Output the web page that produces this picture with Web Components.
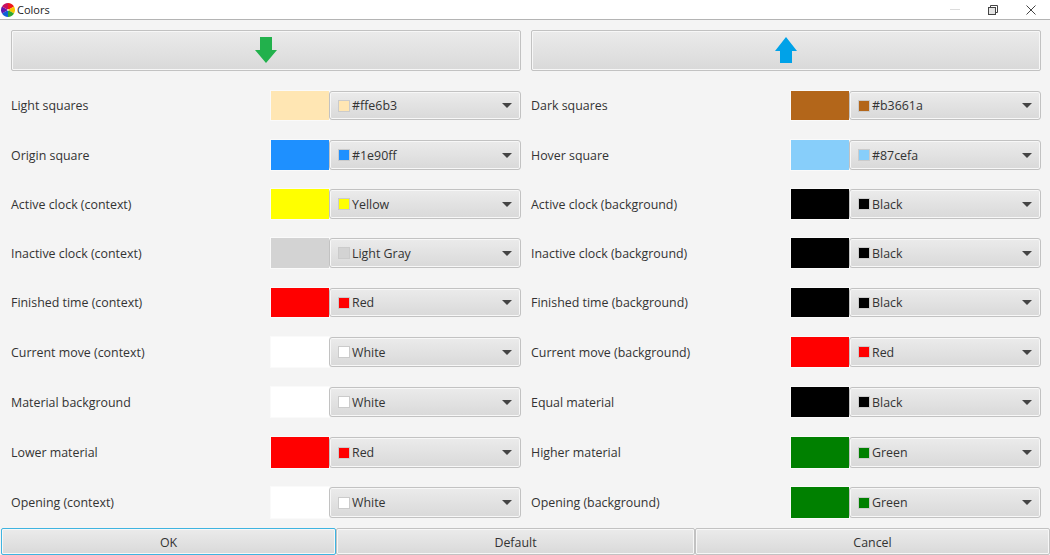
<!DOCTYPE html>
<html><head><meta charset="utf-8"><title>Colors</title>
<style>
html,body{margin:0;height:555px;overflow:hidden;background:#f4f4f4}
body{font-family:"Open Sans","Noto Sans",sans-serif;font-size:12.4px;color:#333}
</style></head><body>
<color-dialog></color-dialog>
<script>
const btnFace='background:linear-gradient(#ebebeb,#d9d9d9);border:1px solid #c2c2c2;box-shadow:0 0 0 1px #f7f7f7 inset;box-sizing:border-box;';
class TitleBar extends HTMLElement{constructor(){super();this.attachShadow({mode:'open'}).innerHTML=`
<style>
:host{display:flex;align-items:center;height:20px;box-sizing:border-box;background:#fff;border-bottom:1px solid #b4b4b4;padding-left:1px;font-size:11px;color:#222}
svg{display:block}
.logo{margin-right:2px}
.t{flex:1;font-family:"Open Sans",sans-serif}
.ctl{display:flex;align-items:center}
.b{width:38px;height:19px;display:flex;align-items:center;justify-content:center}
</style>
<svg class="logo" width="14" height="14" viewBox="0 0 14 14">
<path d="M7 7L7 0A7 7 0 0 1 13 3.5Z" fill="#f01818"/>
<path d="M7 7L13 3.5A7 7 0 0 1 13 10.5Z" fill="#f7c600"/>
<path d="M7 7L13 10.5A7 7 0 0 1 7 14Z" fill="#30a830"/>
<path d="M7 7L7 14A7 7 0 0 1 1 10.5Z" fill="#1060d8"/>
<path d="M7 7L1 10.5A7 7 0 0 1 1 3.5Z" fill="#6018b0"/>
<path d="M7 7L1 3.5A7 7 0 0 1 7 0Z" fill="#c81060"/>
<circle cx="7" cy="7" r="1" fill="#f6e8c8"/></svg>
<span class="t">Colors</span>
<div class="ctl">
<div class="b"><svg width="10" height="2"><rect width="10" height="1" y="0" fill="#dcdcdc"/></svg></div>
<div class="b"><svg width="10" height="10" viewBox="0 0 10 10" fill="none" stroke="#444"><rect x=".5" y="2.5" width="7" height="7" fill="#e4e4e4"/><path d="M2.5 2.5V.5H9.5V7.5H7.5"/></svg></div>
<div class="b"><svg width="10" height="10" viewBox="0 0 10 10" stroke="#444" stroke-width="1"><path d="M.5 .5L9.5 9.5M9.5 .5L.5 9.5"/></svg></div>
</div>`}}
customElements.define('title-bar',TitleBar);

class ArrowButton extends HTMLElement{constructor(){super();const up=this.getAttribute('dir')==='up';const c=up?'#00a2e8':'#22b14c';
const p=up?'M11 0L22 14H17V26H5V14H0Z':'M5 0H17V13H22L11 26L0 13H5Z';
this.attachShadow({mode:'open'}).innerHTML=`
<style>:host{display:flex;align-items:center;justify-content:center;height:41px;border-radius:2px;${btnFace}}svg{margin-top:-1px}</style>
<svg width="22" height="26" viewBox="0 0 22 26"><path d="${p}" fill="${c}"/></svg>`}}
customElements.define('arrow-button',ArrowButton);

class ColorCombo extends HTMLElement{constructor(){super();const c=this.getAttribute('color');
this.attachShadow({mode:'open'}).innerHTML=`
<style>
:host{display:flex;align-items:center;border-radius:3px;padding-left:8px;padding-right:8px;${btnFace}}
.s{width:10px;height:10px;border:1px solid #cbcbcb;background:${c};margin-right:2px;flex:none}
.n{flex:1;white-space:nowrap}
.a{width:0;height:0;border-left:5px solid transparent;border-right:5px solid transparent;border-top:5px solid #444}
</style><span class="s"></span><span class="n"><slot></slot></span><span class="a"></span>`}}
customElements.define('color-combo',ColorCombo);

class ColorRow extends HTMLElement{constructor(){super();const c=this.getAttribute('color');
this.attachShadow({mode:'open'}).innerHTML=`
<style>
:host{display:grid;grid-template-columns:260px 58px 192px;align-items:stretch;align-self:start}
.l{align-self:center;white-space:nowrap}
.w{background:${c};box-shadow:0 0 0 1px #fafafa}
color-combo{position:relative}
</style><span class="l">${this.getAttribute('label')}</span><div class="w"></div><color-combo color="${c}"><slot></slot></color-combo>`}}
customElements.define('color-row',ColorRow);

class DialogButton extends HTMLElement{constructor(){super();const f=this.hasAttribute('focused');
this.attachShadow({mode:'open'}).innerHTML=`
<style>:host{display:flex;align-items:center;justify-content:center;height:27px;padding-top:2px;border-radius:2px;${btnFace}${f?'border-color:#3fb4e0;':''}}</style><slot></slot>`}}
customElements.define('dialog-button',DialogButton);

const rows=[
['Light squares','#ffe6b3','#ffe6b3','Dark squares','#b3661a','#b3661a',29],
['Origin square','#1e90ff','#1e90ff','Hover square','#87cefa','#87cefa',30],
['Active clock (context)','#ffff00','Yellow','Active clock (background)','#000000','Black',30],
['Inactive clock (context)','#d3d3d3','Light Gray','Inactive clock (background)','#000000','Black',30],
['Finished time (context)','#ff0000','Red','Finished time (background)','#000000','Black',29],
['Current move (context)','#ffffff','White','Current move (background)','#ff0000','Red',30],
['Material background','#ffffff','White','Equal material','#000000','Black',30],
['Lower material','#ff0000','Red','Higher material','#008000','Green',31],
['Opening (context)','#ffffff','White','Opening (background)','#008000','Green',31]];
class ColorDialog extends HTMLElement{constructor(){super();
this.attachShadow({mode:'open'}).innerHTML=`
<style>
:host{display:flex;flex-direction:column;height:555px;width:1050px}
.main{padding:10px 9px 0 11px;flex:none;height:508px;box-sizing:border-box;display:flex;flex-direction:column}
.top{display:grid;grid-template-columns:510px 510px;column-gap:10px;margin-bottom:20px}
.rows{display:grid;grid-template-columns:510px 510px;column-gap:10px;grid-template-rows:49px 49px 49px 50px 49px 50px 50px 50px 31px}
.foot{display:grid;grid-template-columns:335px 359px 355px;padding-left:1px}
</style>
<title-bar></title-bar>
<div class="main">
<div class="top"><arrow-button dir="down"></arrow-button><arrow-button dir="up"></arrow-button></div>
<div class="rows">${rows.map(r=>`<color-row style="height:${r[6]}px" label="${r[0]}" color="${r[1]}">${r[2]}</color-row><color-row style="height:${r[6]}px" label="${r[3]}" color="${r[4]}">${r[5]}</color-row>`).join('')}</div>
</div>
<div class="foot"><dialog-button focused>OK</dialog-button><dialog-button>Default</dialog-button><dialog-button>Cancel</dialog-button></div>`}}
customElements.define('color-dialog',ColorDialog);
</script></body></html>
